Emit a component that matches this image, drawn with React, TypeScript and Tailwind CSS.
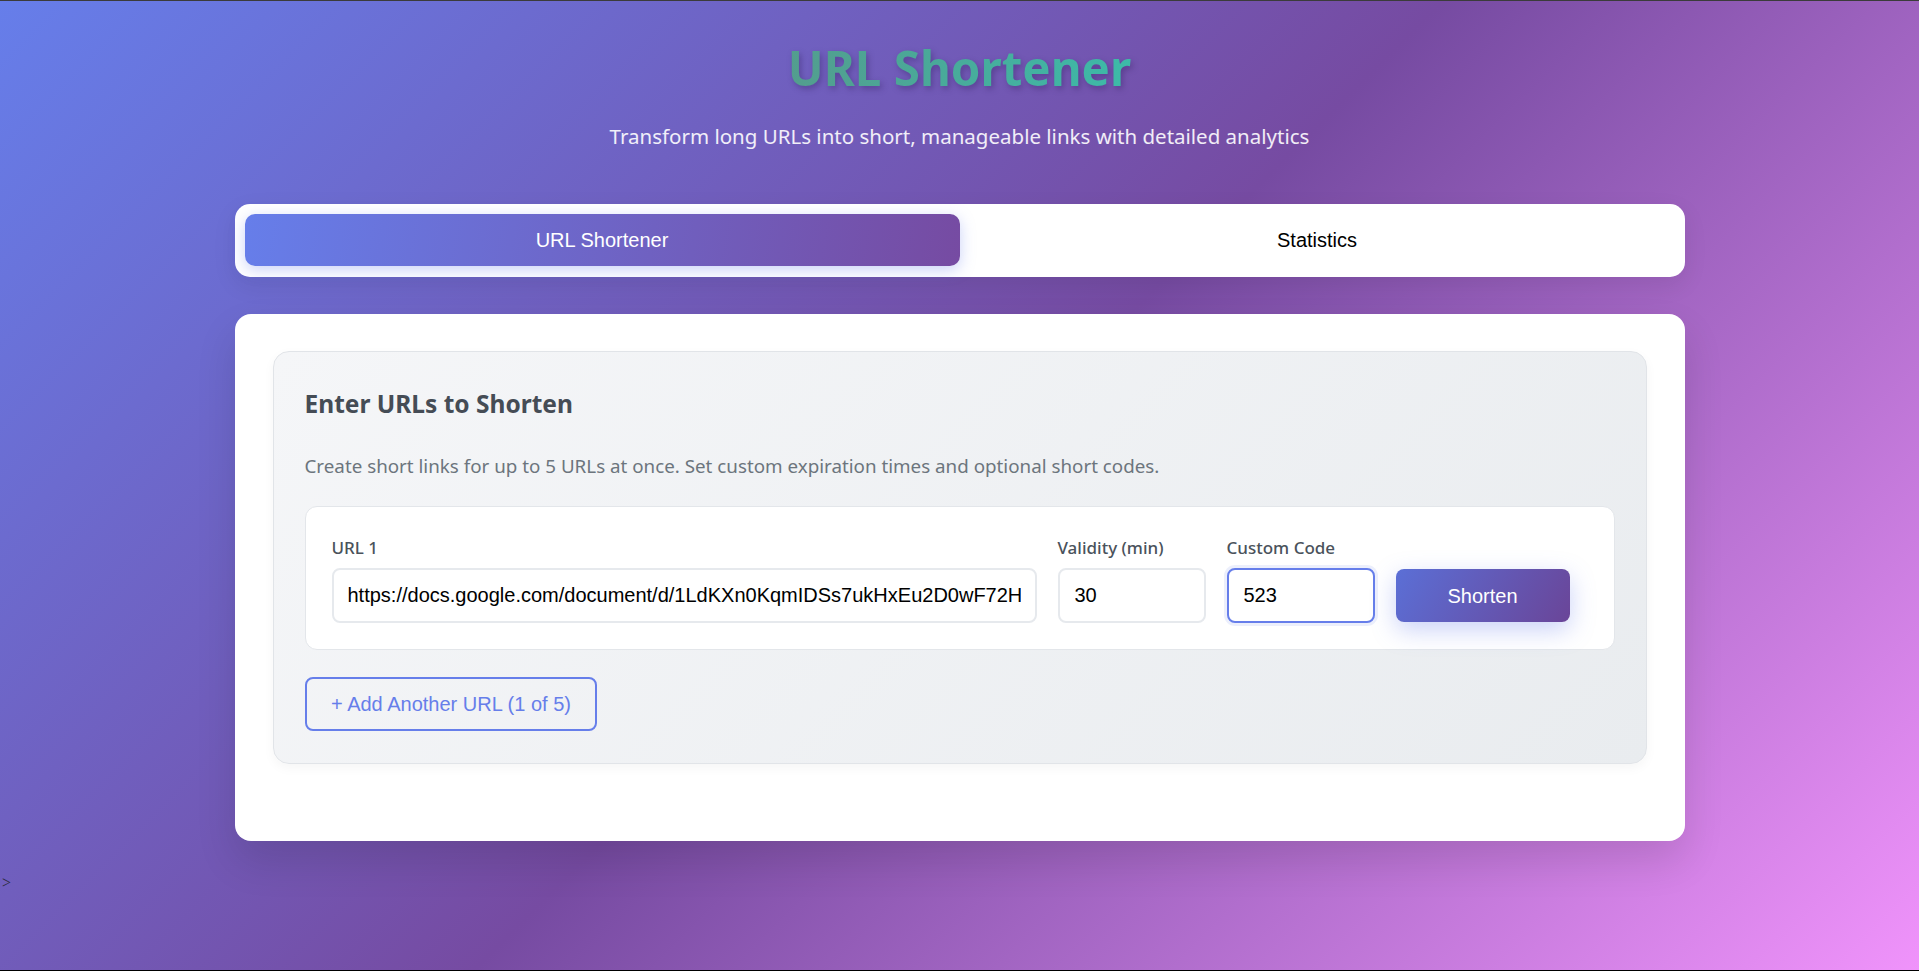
import { useState } from "react";

const sans = "font-['Noto_Sans',sans-serif]";
const arial = "font-['Liberation_Sans',Arial,sans-serif]";

const App = () => {
  const [tab, setTab] = useState("shorten");
  const [url, setUrl] = useState(
    "https://docs.google.com/document/d/1LdKXn0KqmIDSs7ukHxEu2D0wF72H"
  );
  const [validity, setValidity] = useState("30");
  const [code, setCode] = useState("523");

  return (
    <div className="min-h-[971px] w-full border-t border-b border-t-[#3b3b3b] border-b-black bg-[linear-gradient(135deg,#667eea_0%,#764ba2_50%,#f093fb_100%)]">
      <div className="mx-auto w-[1450px] pt-[37px] pb-[30px]">
        <div className={`text-center ${sans}`}>
          <h1 className="inline-block bg-[linear-gradient(90deg,#539d8e,#3dbaa8)] bg-clip-text text-[47.5px] leading-[60px] font-bold text-transparent [filter:drop-shadow(2px_3px_3px_rgba(40,20,80,0.35))]">
            URL Shortener
          </h1>
          <p className="mt-[24px] text-[20.5px] leading-[28px] text-white/90">
            Transform long URLs into short, manageable links with detailed analytics
          </p>
        </div>

        <div className="mt-[54px] flex rounded-[15px] bg-white px-[10px] pt-[10px] pb-[11px] shadow-[0_8px_24px_rgba(0,0,0,0.08)]">
          <button
            onClick={() => setTab("shorten")}
            className={`h-[52px] flex-1 rounded-[10px] text-[20px] ${arial} ${
              tab === "shorten"
                ? "bg-[linear-gradient(100deg,#667eea,#764ba2)] text-white shadow-[0_4px_15px_rgba(102,126,234,0.35)]"
                : "text-black"
            }`}
          >
            URL Shortener
          </button>
          <button
            onClick={() => setTab("stats")}
            className={`h-[52px] flex-1 rounded-[10px] text-[20px] ${arial} ${
              tab === "stats"
                ? "bg-[linear-gradient(100deg,#667eea,#764ba2)] text-white shadow-[0_4px_15px_rgba(102,126,234,0.35)]"
                : "text-black"
            }`}
          >
            Statistics
          </button>
        </div>

        <div className="mt-[37px] rounded-[16px] bg-white px-[38px] pt-[37px] pb-[77px] shadow-[0_20px_40px_rgba(0,0,0,0.12)]">
          <div className="rounded-[16px] border border-[#e1e4e8] bg-[linear-gradient(135deg,#f5f6f8,#e9ecef)] px-[31px] pt-[36px] pb-[32px] shadow-[0_4px_12px_rgba(0,0,0,0.04)]">
            <h2 className={`text-[24.5px] leading-[32px] font-bold text-[#454c55] ${sans}`}>
              Enter URLs to Shorten
            </h2>
            <p className={`mt-[33px] text-[18.8px] leading-[27px] text-[#6c757d] ${sans}`}>
              Create short links for up to 5 URLs at once. Set custom expiration times and optional short codes.
            </p>

            <div className="mt-[26px] flex items-end gap-[21px] rounded-[12px] border border-[#e3e6ea] bg-white pt-[29px] pr-[44px] pb-[26px] pl-[26px]">
              <div className="flex flex-1 flex-col">
                <label className={`text-[17px] leading-[24px] font-medium text-[#4a525b] ${sans}`}>
                  URL 1
                </label>
                <input
                  value={url}
                  onChange={(e) => setUrl(e.target.value)}
                  className={`mt-[8px] h-[55px] rounded-[8px] border-2 border-[#e6e9ed] bg-white px-[14px] text-[20px] text-black outline-none ${arial}`}
                />
              </div>
              <div className="flex w-[148px] flex-col">
                <label className={`text-[17px] leading-[24px] font-medium text-[#4a525b] ${sans}`}>
                  Validity (min)
                </label>
                <input
                  value={validity}
                  onChange={(e) => setValidity(e.target.value)}
                  className={`mt-[8px] h-[55px] w-full rounded-[8px] border-2 border-[#e6e9ed] bg-white px-[15px] text-[20px] text-black outline-none ${arial}`}
                />
              </div>
              <div className="flex w-[148px] flex-col">
                <label className={`text-[17px] leading-[24px] font-medium text-[#4a525b] ${sans}`}>
                  Custom Code
                </label>
                <input
                  value={code}
                  onChange={(e) => setCode(e.target.value)}
                  className={`mt-[8px] h-[55px] w-full rounded-[8px] border-2 border-[#667eea] bg-white px-[15px] text-[20px] text-black shadow-[0_0_0_3px_rgba(102,126,234,0.12)] outline-none ${arial}`}
                />
              </div>
              <button
                className={`mb-[1px] h-[53px] w-[174px] rounded-[8px] bg-[linear-gradient(120deg,#5b6fd6,#6a4598)] text-[20px] text-white shadow-[0_8px_25px_rgba(102,126,234,0.35)] ${arial}`}
              >
                Shorten
              </button>
            </div>

            <button
              className={`mt-[27px] h-[54px] rounded-[8px] border-2 border-[#667eea] px-[24.5px] text-[20px] text-[#667eea] ${arial}`}
            >
              + Add Another URL (1 of 5)
            </button>
          </div>
        </div>
      </div>
      <div className="pl-[2px] font-['Liberation_Serif',serif] text-[16px] leading-[24px] text-[#2a2a3a]">
        &gt;
      </div>
    </div>
  );
};

export default App;
